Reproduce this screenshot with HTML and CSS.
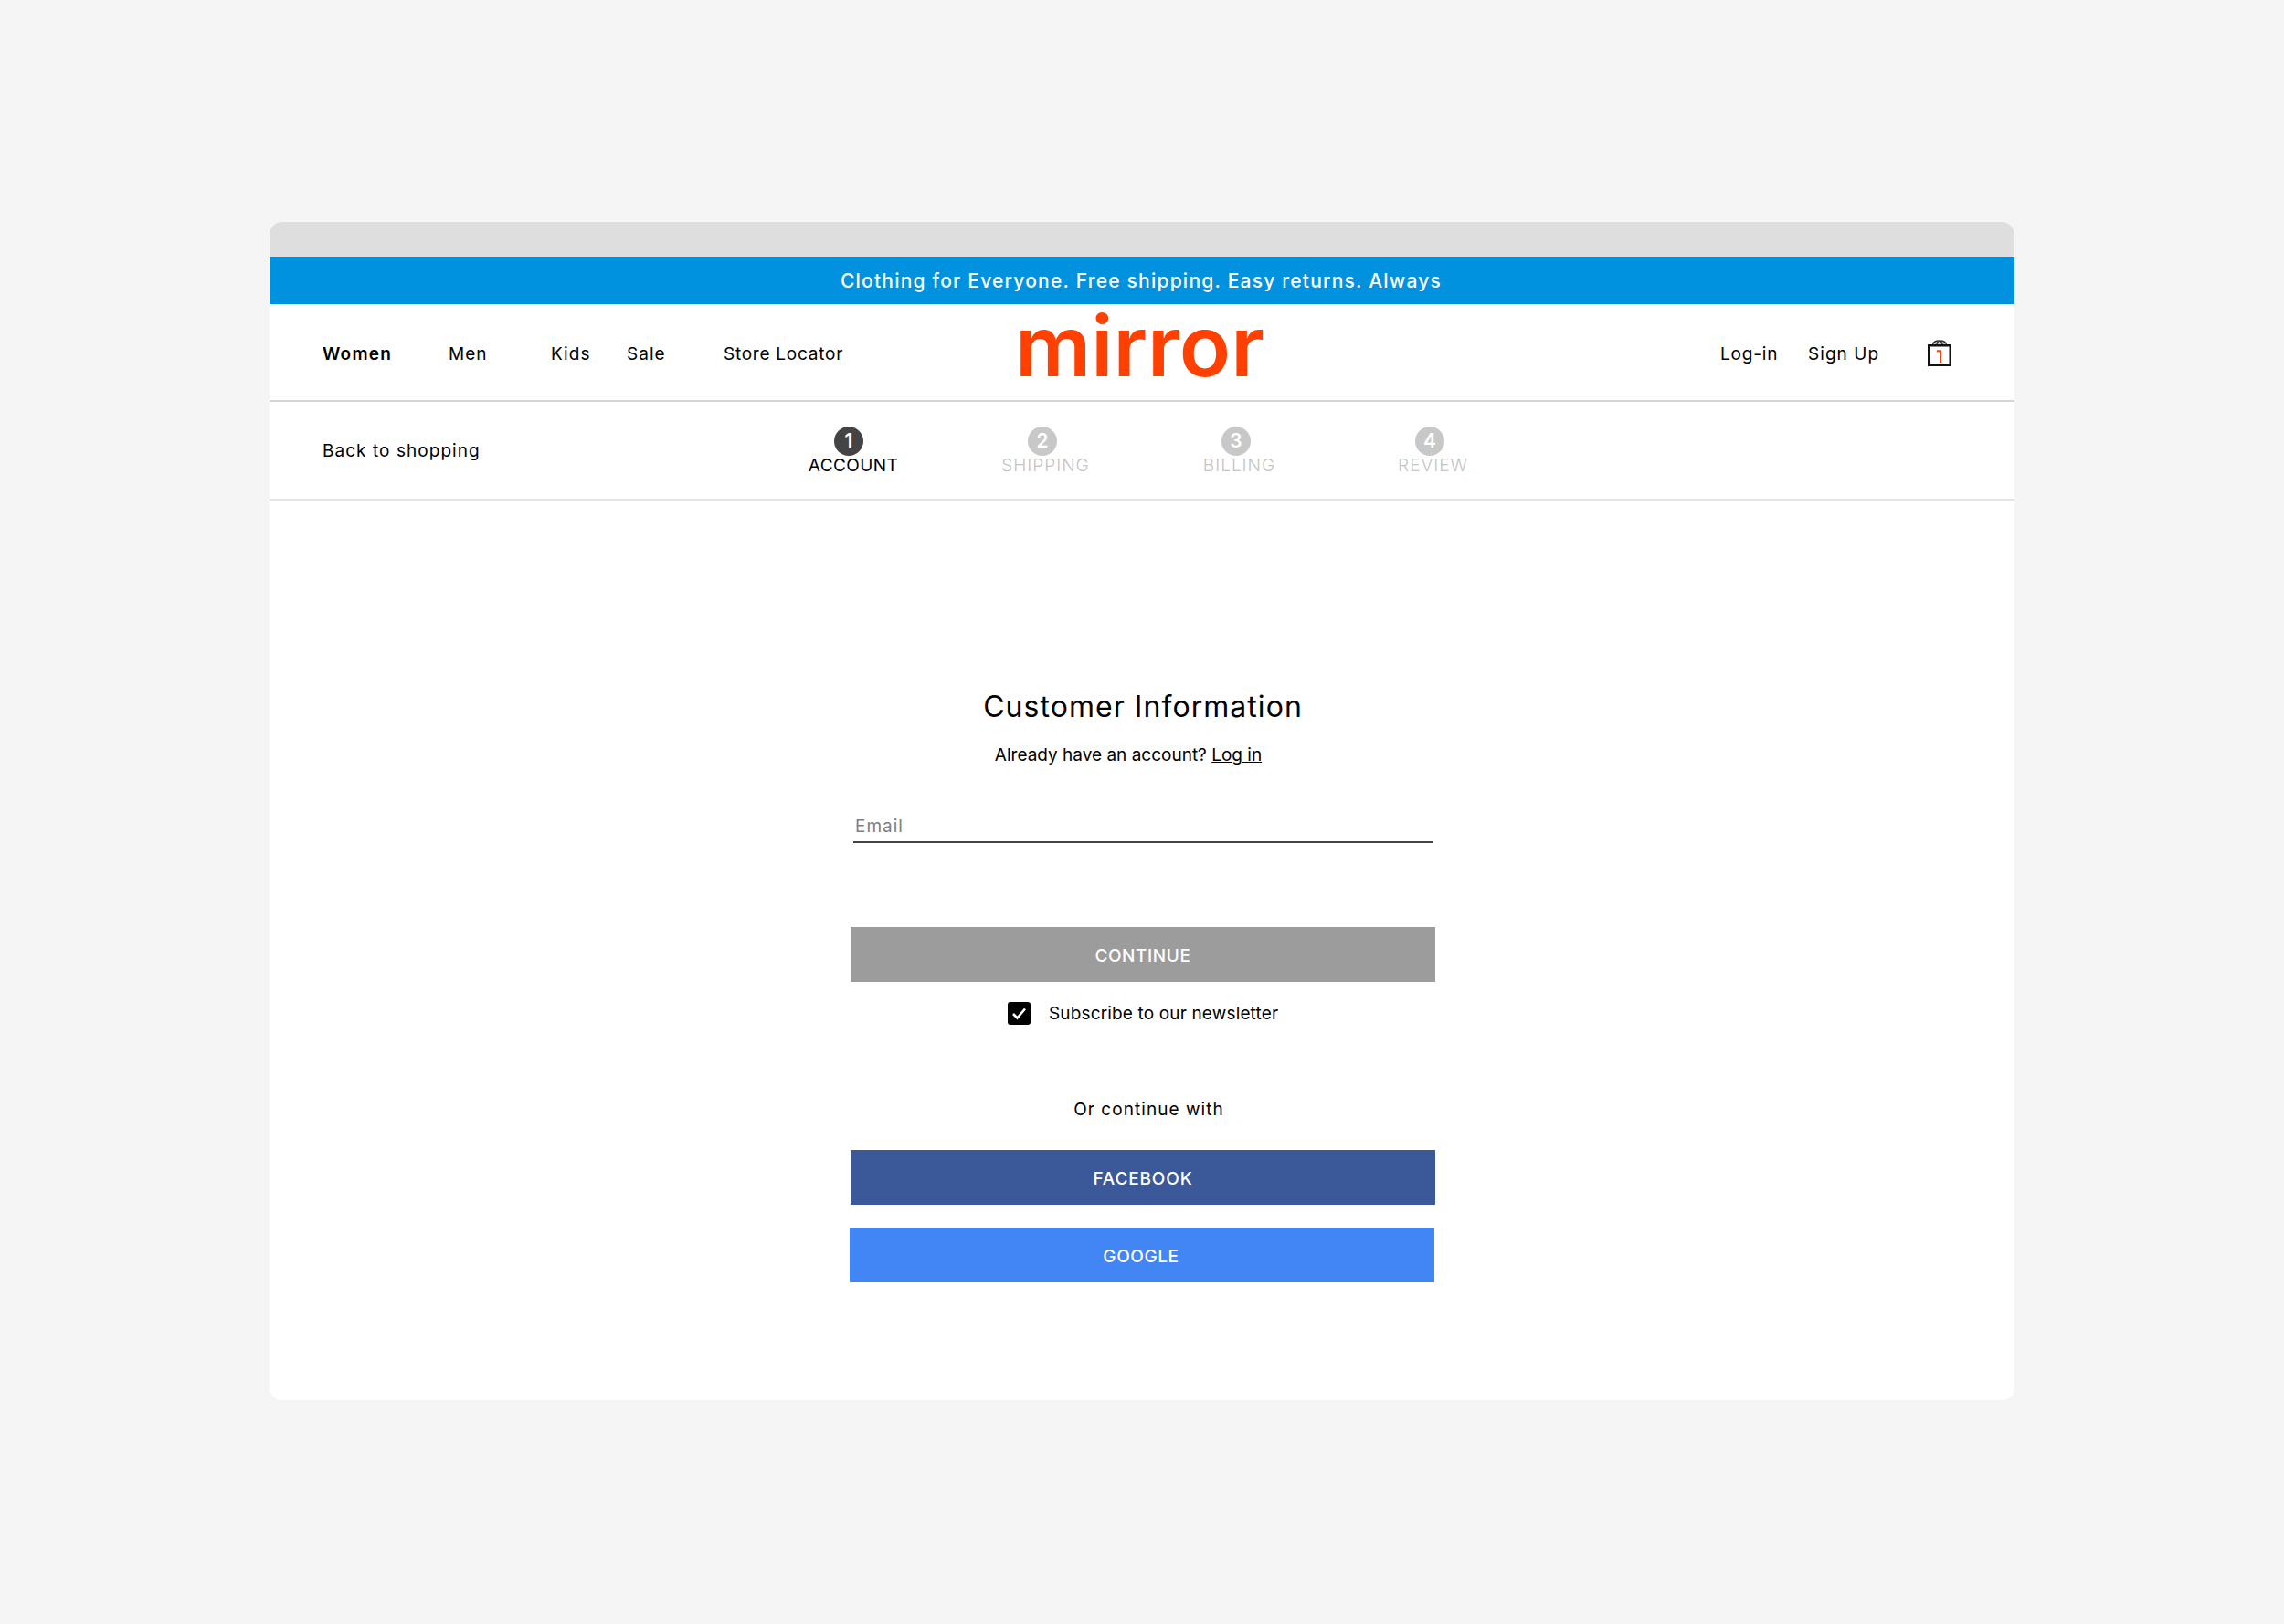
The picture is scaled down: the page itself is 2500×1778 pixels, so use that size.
FILE: index.html
```html
<!DOCTYPE html>
<html lang="en">
<head>
<meta charset="utf-8">
<title>mirror - Customer Information</title>
<link rel="stylesheet" href="styles.css">
</head>
<body>
<main class="window">
  <div class="chrome"></div>
  <div class="promo">Clothing for Everyone. Free shipping. Easy returns. Always</div>
  <header class="nav">
    <nav class="nav-left">
      <a class="nav-link women">Women</a>
      <a class="nav-link men">Men</a>
      <a class="nav-link kids">Kids</a>
      <a class="nav-link sale">Sale</a>
      <a class="nav-link store">Store Locator</a>
    </nav>
    <div class="logo">mirror</div>
    <div class="nav-right">
      <a class="nav-link login">Log-in</a>
      <a class="nav-link signup">Sign Up</a>
      <svg class="bag" width="26" height="29" viewBox="0 0 26 29" aria-hidden="true">
        <path d="M5.500 6C5.500 2.500 8.500 0.800 13 0.800S20.500 2.500 20.500 6M10 6C10 3 11 1.500 13 0.800C15 1.500 16 3 16 6M6.500 3.500H19.500" fill="none" stroke="#222" stroke-width="1.300"/>
        <rect x="1.250" y="6.250" width="23.500" height="21.500" fill="none" stroke="#111" stroke-width="2.500"/>
        <path d="M9.800 12.200H14V25" fill="none" stroke="#ff4000" stroke-width="2"/>
      </svg>
    </div>
  </header>
  <section class="steps-bar">
    <a class="back">Back to shopping</a>
    <ol class="steps">
      <li class="step active"><span class="num">1</span><span class="label">ACCOUNT</span></li>
      <li class="step"><span class="num">2</span><span class="label">SHIPPING</span></li>
      <li class="step"><span class="num">3</span><span class="label">BILLING</span></li>
      <li class="step"><span class="num">4</span><span class="label">REVIEW</span></li>
    </ol>
  </section>
  <section class="form">
    <h1 class="title">Customer Information</h1>
    <p class="have">Already have an account? <a class="have-link">Log in</a></p>
    <div class="field">Email</div>
    <button class="btn continue">CONTINUE</button>
    <label class="sub">
      <svg class="check" width="25" height="25" viewBox="0 0 25 25" aria-hidden="true">
        <rect width="25" height="25" rx="3" fill="#000"/>
        <path d="M6 13L10.500 17.500L19 7.500" fill="none" stroke="#fff" stroke-width="2.600"/>
      </svg>
      <span>Subscribe to our newsletter</span>
    </label>
    <p class="or">Or continue with</p>
    <button class="btn facebook">FACEBOOK</button>
    <button class="btn google">GOOGLE</button>
  </section>
</main>
</body>
</html>
```

FILE: styles.css
```css
* { box-sizing: border-box; }
html, body { margin: 0; padding: 0; }
body {
  background: #f5f5f5;
  font-family: Inter, "Open Sans", sans-serif;
  color: #000;
  height: 1778px;
  padding-top: 243px;
}
.window {
  width: 1910px;
  height: 1290px;
  margin-left: 295px;
  background: #fff;
  border-radius: 14px;
  overflow: hidden;
}
.chrome { height: 38px; background: #dedede; }
.promo {
  height: 52px;
  background: #0091df;
  color: #fff;
  font-size: 21px;
  font-weight: 500;
  letter-spacing: 1.22px;
  line-height: 54px;
  text-align: center;
  padding-right: 2px;
}
.nav {
  height: 107px;
  border-bottom: 2px solid #d4d4d4;
  display: flex;
  align-items: center;
  padding: 4px 0 0 58px;
}
.nav-left { display: flex; align-items: center; width: 758px; }
.nav-link { font-size: 19px; letter-spacing: 1.05px; white-space: nowrap; }
.women { font-weight: 600; width: 138px; letter-spacing: 1.2px; }
.men { width: 112px; }
.kids { width: 83px; }
.sale { width: 106px; }
.store { letter-spacing: 0.75px; }
.logo {
  width: 772px;
  color: #ff4000;
  font-size: 92.5px;
  font-weight: 600;
  line-height: 107px;
  margin-top: -19px;
}
.nav-right { display: flex; align-items: center; }
.login { width: 96px; letter-spacing: 0.8px; }
.signup { width: 131px; }
.bag { display: block; margin-top: -3px; }
.steps-bar {
  height: 108px;
  border-bottom: 2px solid #e4e4e4;
  display: flex;
  align-items: center;
  padding-left: 58px;
}
.back { font-size: 19px; letter-spacing: 1.05px; width: 531px; white-space: nowrap; }
.steps {
  list-style: none;
  margin: 0;
  padding: 2.5px 0 0;
  display: flex;
  gap: 112px;
}
.step {
  width: 100px;
  display: flex;
  flex-direction: column;
  align-items: center;
  color: #c4c4c4;
}
.num {
  width: 32px;
  height: 32px;
  border-radius: 50%;
  background: #c8c8c8;
  color: #fff;
  font-size: 21px;
  font-weight: 600;
  line-height: 32px;
  text-align: center;
  margin-right: 10px;
}
.label {
  font-size: 19px;
  font-weight: 300;
  line-height: 24px;
  margin: -1.5px 3px 0 0;
  white-space: nowrap;
  letter-spacing: 1px;
}
.active { color: #000; }
.active .label { font-weight: 400; letter-spacing: 0.4px; margin-right: 0; }
.active .num { background: #444; }
.form {
  width: 640px;
  margin-left: 636px;
  display: flex;
  flex-direction: column;
  align-items: stretch;
  padding-top: 204px;
}
.title {
  margin: 0;
  font-size: 32px;
  font-weight: 400;
  line-height: 44px;
  letter-spacing: 1.05px;
  text-align: center;
}
.have {
  margin: 18px 0 0;
  font-size: 19px;
  line-height: 26px;
  text-align: center;
  padding-right: 32px;
}
.have-link { text-decoration: underline; }
.field {
  margin: 52px 3px 0 3px;
  height: 31px;
  font-size: 19px;
  line-height: 26px;
  padding-left: 2px;
  color: #808080;
  border-bottom: 2px solid #444;
  letter-spacing: 1px;
}
.btn {
  display: block;
  width: 640px;
  height: 60px;
  border: 0;
  padding: 2px 0 0;
  color: #fff;
  font-family: inherit;
  font-size: 19px;
  font-weight: 500;
  letter-spacing: 0.6px;
}
.continue { background: #9c9c9c; margin-top: 92px; }
.sub {
  display: flex;
  align-items: center;
  gap: 20px;
  margin: 22px 0 0 172px;
  height: 25px;
  font-size: 19px;
  letter-spacing: 0.15px;
}
.check { display: block; flex: none; }
.or {
  margin: 80px 0 0;
  font-size: 19px;
  line-height: 26px;
  text-align: center;
  padding-left: 13px;
  letter-spacing: 1.05px;
}
.facebook { background: #3b5998; margin-top: 31px; letter-spacing: 0.85px; }
.google { background: #4285f4; margin: 25px 0 0 -1px; padding-right: 2px; }
```
